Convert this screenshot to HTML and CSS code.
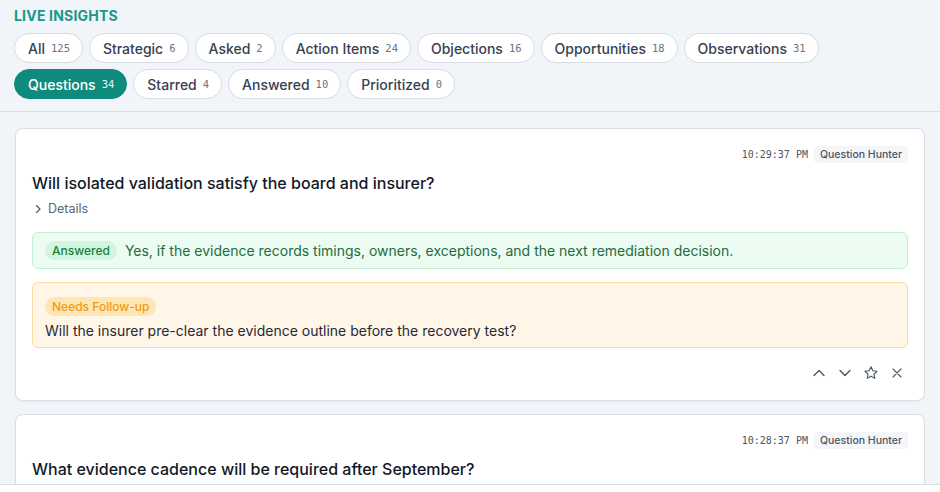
FILE: index.html
```html
<!DOCTYPE html>
<html lang="en">
<head>
  <meta charset="UTF-8">
  <meta name="viewport" content="width=device-width, initial-scale=1.0">
  <title>Live Insights</title>
  <link rel="stylesheet" href="styles.css">
</head>
<body>
  <div class="panel">
    <header class="insights-header">
      <h2 class="insights-title">Live Insights</h2>
      <div class="filters">
        <button class="chip">All <span class="count">125</span></button>
        <button class="chip">Strategic <span class="count">6</span></button>
        <button class="chip">Asked <span class="count">2</span></button>
        <button class="chip">Action Items <span class="count">24</span></button>
        <button class="chip">Objections <span class="count">16</span></button>
        <button class="chip">Opportunities <span class="count">18</span></button>
        <button class="chip">Observations <span class="count">31</span></button>
        <button class="chip active">Questions <span class="count">34</span></button>
        <button class="chip">Starred <span class="count">4</span></button>
        <button class="chip">Answered <span class="count">10</span></button>
        <button class="chip">Prioritized <span class="count">0</span></button>
      </div>
    </header>

    <div class="feed">
      <article class="insight-card">
        <div class="card-meta">
          <span class="time">10:29:37 PM</span>
          <span class="agent">Question Hunter</span>
        </div>
        <h3 class="card-title">Will isolated validation satisfy the board and insurer?</h3>
        <div class="details">
          <svg width="12" height="12" viewBox="0 0 12 12" fill="none" stroke="currentColor" stroke-width="1.1" stroke-linecap="round" stroke-linejoin="round"><path d="M4.5 2.5 8 6l-3.5 3.5"/></svg>
          <span>Details</span>
        </div>
        <div class="answer-box">
          <span class="tag tag-answered">Answered</span>
          <span class="answer-text">Yes, if the evidence records timings, owners, exceptions, and the next remediation decision.</span>
        </div>
        <div class="followup-box">
          <span class="tag tag-followup">Needs Follow-up</span>
          <p class="followup-text">Will the insurer pre-clear the evidence outline before the recovery test?</p>
        </div>
        <div class="card-actions">
          <button class="icon-btn" title="Move up">
            <svg width="16" height="16" viewBox="0 0 16 16" fill="none" stroke="currentColor" stroke-width="1.4" stroke-linecap="round" stroke-linejoin="round"><path d="M3 10.5 8 5.5l5 5"/></svg>
          </button>
          <button class="icon-btn" title="Move down">
            <svg width="16" height="16" viewBox="0 0 16 16" fill="none" stroke="currentColor" stroke-width="1.4" stroke-linecap="round" stroke-linejoin="round"><path d="M3 5.5 8 10.5l5-5"/></svg>
          </button>
          <button class="icon-btn" title="Star">
            <svg width="16" height="16" viewBox="0 0 16 16" fill="none" stroke="currentColor" stroke-width="1.1" stroke-linejoin="round"><path d="M8 1.8l1.85 3.9 4.2.55-3.08 2.92.78 4.2L8 11.3l-3.75 2.07.78-4.2L1.95 6.25l4.2-.55z"/></svg>
          </button>
          <button class="icon-btn" title="Dismiss">
            <svg width="16" height="16" viewBox="0 0 16 16" fill="none" stroke="currentColor" stroke-width="1.1" stroke-linecap="round"><path d="M4 4l8 8M12 4l-8 8"/></svg>
          </button>
        </div>
      </article>

      <article class="insight-card">
        <div class="card-meta">
          <span class="time">10:28:37 PM</span>
          <span class="agent">Question Hunter</span>
        </div>
        <h3 class="card-title">What evidence cadence will be required after September?</h3>
      </article>
    </div>

    <footer class="panel-footer"></footer>
  </div>
</body>
</html>
```

FILE: styles.css
```css
* {
  box-sizing: border-box;
}
html, body {
  height: 100%;
}
body {
  margin: 0;
  font-family: Inter, 'Noto Sans', Arial, sans-serif;
  background: #f1f4f8;
  color: #1e293b;
  overflow: hidden;
}
.panel {
  height: 100%;
  display: flex;
  flex-direction: column;
}
.insights-header {
  padding: 7px 14px 12px;
  border-bottom: 1px solid #d9dee5;
}
.insights-title {
  margin: 0 0 9px;
  font-size: 14px;
  font-weight: 700;
  letter-spacing: 0.2px;
  text-transform: uppercase;
  color: #18988a;
}
.filters {
  display: flex;
  flex-wrap: wrap;
  gap: 6px;
}
.chip {
  display: inline-flex;
  align-items: center;
  gap: 6px;
  height: 30px;
  padding: 0 12px 0 13px;
  border: 1px solid #d7dce3;
  border-radius: 15px;
  background: #ffffff;
  font-family: inherit;
  font-size: 14px;
  font-weight: 500;
  color: #374151;
  cursor: pointer;
}
.chip .count {
  font-family: 'DejaVu Sans Mono', 'Liberation Mono', monospace;
  font-size: 10.5px;
  font-weight: 400;
  color: #6b7280;
}
.chip.active {
  background: #0f8b7e;
  border-color: #0f8b7e;
  color: #ffffff;
}
.chip.active .count {
  color: #e6f5f3;
}
.feed {
  flex: 1;
  overflow: hidden;
  padding: 16px 15px 0;
  display: flex;
  flex-direction: column;
  gap: 13px;
}
.insight-card {
  flex-shrink: 0;
  background: #ffffff;
  border: 1px solid #d9dee5;
  border-radius: 8px;
  box-shadow: 0 1px 2px rgba(15, 23, 42, 0.05);
  padding: 17px 16px 19px;
}
.card-meta {
  display: flex;
  justify-content: flex-end;
  align-items: center;
  gap: 6px;
}
.time {
  font-family: 'DejaVu Sans Mono', 'Liberation Mono', monospace;
  font-size: 10px;
  color: #4b5563;
}
.agent {
  padding: 2px 6px;
  border-radius: 4px;
  background: #f4f6f9;
  font-size: 10.5px;
  font-weight: 500;
  color: #4b5563;
}
.card-title {
  margin: 8px 0 6px;
  font-size: 16px;
  font-weight: 500;
  line-height: 24px;
  color: #111827;
}
.details {
  display: flex;
  align-items: center;
  gap: 4px;
  font-size: 12.5px;
  color: #5b6474;
  margin-bottom: 16px;
}
.details svg {
  color: #4b5563;
}
.tag {
  display: inline-block;
  padding: 2px 7px;
  border-radius: 10px;
  font-size: 12px;
  font-weight: 500;
  line-height: 15px;
}
.answer-box {
  display: flex;
  align-items: center;
  gap: 8px;
  padding: 8px 12px;
  border: 1px solid #c3efd3;
  border-radius: 6px;
  background: #ecfcf2;
}
.tag-answered {
  background: #d3f6e0;
  color: #17803d;
}
.answer-text {
  font-size: 14px;
  color: #236b43;
}
.followup-box {
  margin-top: 13px;
  padding: 12px 12px 8px;
  border: 1px solid #f8dba4;
  border-radius: 6px;
  background: #fff6e8;
}
.tag-followup {
  background: #fde7b6;
  color: #f29a0f;
}
.followup-text {
  margin: 6px 0 0;
  font-size: 14px;
  color: #1f2937;
}
.card-actions {
  display: flex;
  justify-content: flex-end;
  gap: 10px;
  margin-top: 17px;
  padding-right: 3px;
}
.icon-btn {
  display: inline-flex;
  padding: 0;
  border: 0;
  background: none;
  color: #4b5563;
  cursor: pointer;
}
.panel-footer {
  height: 8px;
  flex-shrink: 0;
  background: #ffffff;
  border-top: 1px solid #d9dee5;
}
```
